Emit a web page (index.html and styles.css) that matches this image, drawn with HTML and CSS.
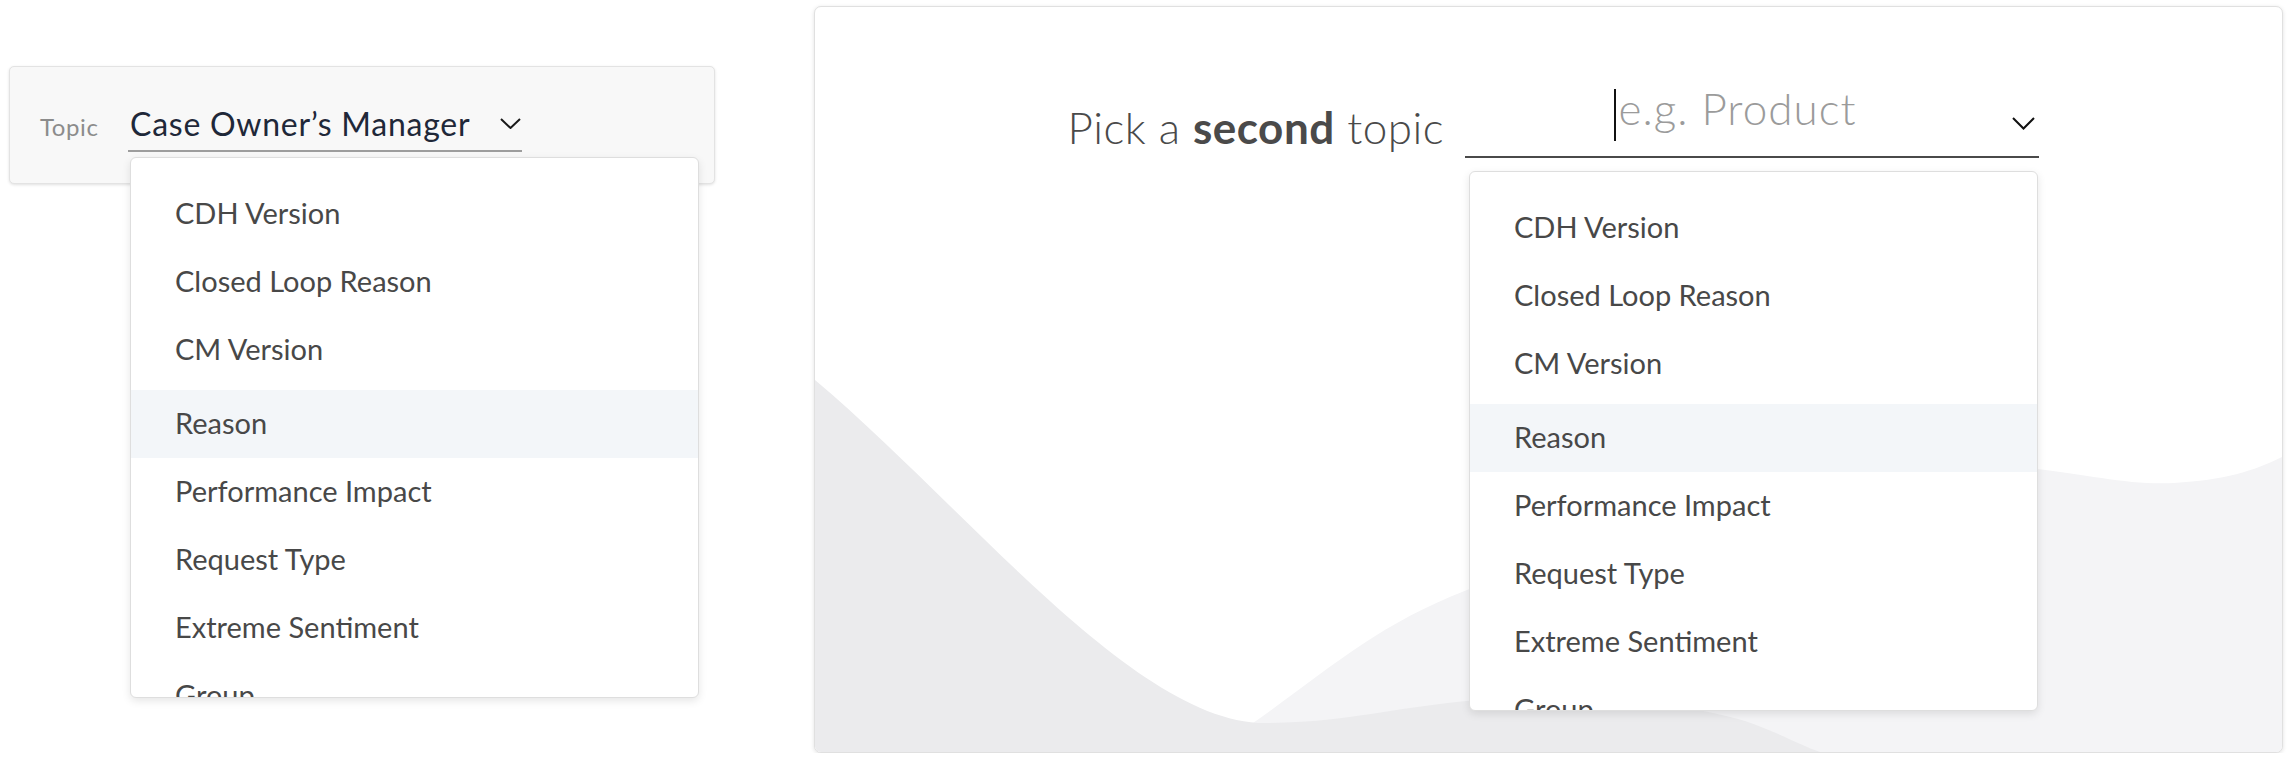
FILE: index.html
```html
<!DOCTYPE html>
<html lang="en">
<head>
<meta charset="utf-8">
<title>Topic pickers</title>
<link rel="stylesheet" href="styles.css">
</head>
<body>
<div class="page">
  <section class="topic-card">
    <span class="topic-label">Topic</span>
    <div class="select">
      <span class="select-value">Case Owner’s Manager</span>
      <svg class="chev chev-small" viewBox="0 0 21 11" width="21" height="11" aria-hidden="true"><polyline points="1,1 10.5,10 20,1" fill="none" stroke="#1a1a1a" stroke-width="2"/></svg>
      <ul class="menu menu-left">
        <li>CDH Version</li>
        <li>Closed Loop Reason</li>
        <li>CM Version</li>
        <li class="active">Reason</li>
        <li>Performance Impact</li>
        <li>Request Type</li>
        <li>Extreme Sentiment</li>
        <li>Group</li>
      </ul>
    </div>
  </section>

  <section class="pick-card">
    <svg class="waves" viewBox="0 0 1467 745" preserveAspectRatio="none" aria-hidden="true">
      <path fill="#f4f4f6" d="M438,716 C519,659 560,619 652,583 C819,519 979,454 1149,457 C1249,459 1299,479 1359,476 C1409,473 1439,464 1467,450 L1467,745 L438,745 Z"/>
      <path fill="#ebebed" d="M0,373 C150,499 320,716 450,716 C540,716 600,694 700,691 C800,688 880,699 930,714 C960,724 985,738 1005,745 L0,745 Z"/>
    </svg>
    <div class="pick-row">
      <span class="pick-label">Pick a <b>second</b> topic</span>
      <div class="pick-input">
        <span class="caret"></span><span class="placeholder">e.g. Product</span>
        <svg class="chev chev-large" viewBox="0 0 23 13" width="23" height="13" aria-hidden="true"><polyline points="1,1 11.5,11.5 22,1" fill="none" stroke="#111" stroke-width="2"/></svg>
        <ul class="menu menu-right">
          <li>CDH Version</li>
          <li>Closed Loop Reason</li>
          <li>CM Version</li>
          <li class="active">Reason</li>
          <li>Performance Impact</li>
          <li>Request Type</li>
          <li>Extreme Sentiment</li>
          <li>Group</li>
        </ul>
      </div>
    </div>
  </section>
</div>
</body>
</html>
```

FILE: styles.css
```css
html, body {
  margin: 0;
  background: #ffffff;
  font-family: Lato, "Open Sans", "Noto Sans", sans-serif;
}

.page {
  display: flex;
  align-items: flex-start;
  gap: 99px;
  padding: 6px 0 0 9px;
}

/* ---------- left: compact topic select ---------- */
.topic-card {
  margin-top: 60px;
  width: 706px;
  height: 118px;
  box-sizing: border-box;
  background: #f8f8f8;
  border: 1px solid #e3e3e3;
  border-radius: 5px;
  box-shadow: 0 1px 3px rgba(0, 0, 0, 0.12);
  display: flex;
  align-items: baseline;
  gap: 30px;
  padding: 37px 0 0 30px;
}

.topic-label {
  width: 58px;
  font-size: 24px;
  letter-spacing: 0.6px;
  color: #8c8c8c;
}

.select {
  position: relative;
  width: 394px;
  box-sizing: border-box;
  border-bottom: 2px solid #9d9d9d;
  padding: 0 0 6px 2px;
}

.select-value {
  display: block;
  font-size: 32px;
  line-height: 40px;
  letter-spacing: 0.75px;
  color: #1f2839;
}

.chev {
  position: absolute;
  display: block;
}

.chev-small {
  right: 1px;
  top: 14px;
}

.chev-large {
  right: 4px;
  top: 37px;
}

/* ---------- dropdown menus ---------- */
.menu {
  position: absolute;
  z-index: 2;
  width: 569px;
  box-sizing: border-box;
  margin: 0;
  padding: 22px 0 0;
  list-style: none;
  background: #ffffff;
  border: 1px solid #dedede;
  border-radius: 6px;
  box-shadow: 0 3px 8px rgba(0, 0, 0, 0.1);
  overflow: hidden;
  text-align: left;
}

.menu li {
  height: 68px;
  box-sizing: border-box;
  padding: 0 0 3px 44px;
  font-size: 29px;
  font-weight: 400;
  line-height: 65px;
  color: #484848;
  white-space: nowrap;
}

.menu li.active {
  margin-top: 6px;
  background: #f3f6f9;
}

.menu-left {
  top: calc(100% + 7px);
  left: 2px;
  height: 541px;
}

.menu-right {
  top: calc(100% + 15px);
  left: 4px;
  height: 540px;
}

/* ---------- right: large picker card ---------- */
.pick-card {
  position: relative;
  width: 1469px;
  height: 747px;
  box-sizing: border-box;
  background: #ffffff;
  border: 1px solid #e0e0e0;
  border-radius: 7px;
  box-shadow: 0 1px 4px rgba(0, 0, 0, 0.12);
  overflow: hidden;
}

.waves {
  position: absolute;
  inset: 0;
  width: 100%;
  height: 100%;
  display: block;
}

.pick-row {
  position: relative;
  display: flex;
  justify-content: flex-end;
  align-items: flex-end;
  gap: 21px;
  padding: 73px 243px 0 0;
}

.pick-label {
  font-size: 44px;
  font-weight: 300;
  line-height: 56px;
  letter-spacing: 0.5px;
  color: #4a4a4a;
  margin-bottom: 3px;
  white-space: nowrap;
}

.pick-label b {
  font-weight: 700;
}

.pick-input {
  position: relative;
  width: 574px;
  box-sizing: border-box;
  border-bottom: 2px solid #4a4a4a;
  padding: 0 34px 20px 0;
  text-align: center;
  font-size: 44px;
  font-weight: 300;
  line-height: 56px;
  color: #9b9b9b;
}

.placeholder {
  letter-spacing: 1px;
}

.caret {
  display: inline-block;
  width: 2px;
  height: 52px;
  margin: 0 3px -5px 0;
  vertical-align: -11px;
  background: #111111;
}
```
